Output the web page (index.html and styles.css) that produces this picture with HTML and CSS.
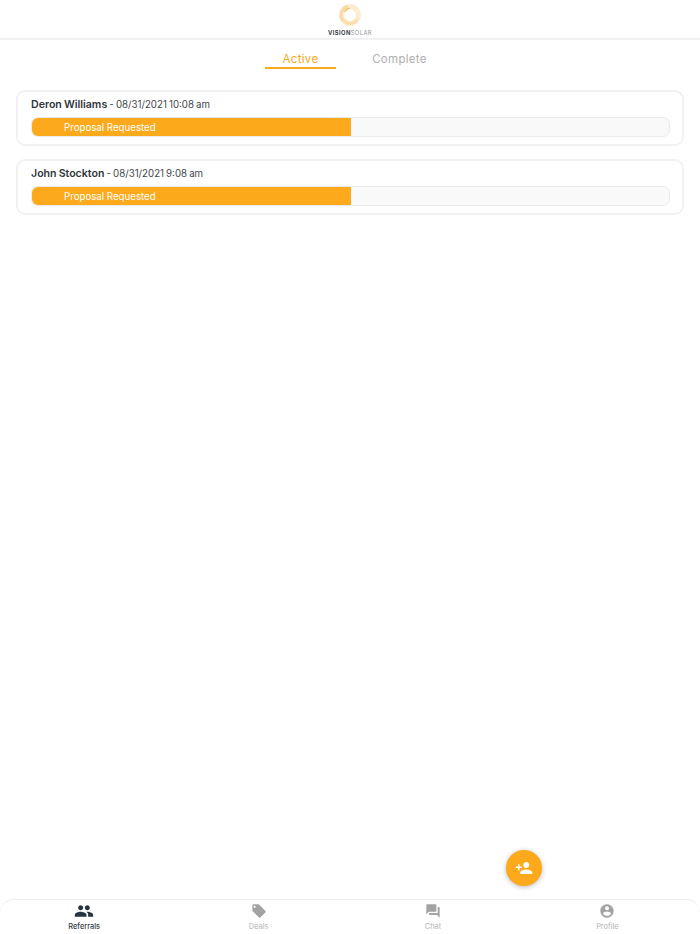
FILE: index.html
```html
<!DOCTYPE html>
<html lang="en">
<head>
<meta charset="utf-8"/>
<meta content="width=device-width, initial-scale=1.0" name="viewport"/>
<title>Vision Solar Referrals</title>
<link rel="stylesheet" href="styles.css">
</head>
<body>
<div class="page">
  <header class="top-bar">
    <div class="logo">
      <svg class="logo-mark" viewBox="0 0 24 24" width="24" height="24">
        <circle cx="12" cy="12" r="8.4" fill="none" stroke="#fdeccf" stroke-width="5"/>
        <path d="M10 3.4A8.8 8.8 0 0 0 5.4 18" fill="none" stroke="#fbd9a0" stroke-width="3"/>
        <path d="M5.4 17.5A9 9 0 0 0 19.5 16.5" fill="none" stroke="#fbdfb0" stroke-width="3"/>
        <path d="M6.6 9A6.4 6.4 0 0 1 12 5.2" fill="none" stroke="#f8c272" stroke-width="1.6"/>
      </svg>
      <div class="logo-text"><b>VISION</b>SOLAR</div>
    </div>
  </header>

  <nav class="tabs">
    <div class="tab active">Active</div>
    <div class="tab">Complete</div>
  </nav>

  <main class="list">
    <div class="card">
      <div class="card-title"><b>Deron Williams</b> - 08/31/2021 10:08 am</div>
      <div class="progress">
        <div class="progress-fill">Proposal Requested</div>
      </div>
    </div>
    <div class="card">
      <div class="card-title"><b>John Stockton</b> - 08/31/2021 9:08 am</div>
      <div class="progress">
        <div class="progress-fill">Proposal Requested</div>
      </div>
    </div>
  </main>

  <button class="fab">
    <svg viewBox="0 0 24 24" width="18" height="18"><path fill="#fff" d="M15 12c2.21 0 4-1.79 4-4s-1.79-4-4-4-4 1.79-4 4 1.79 4 4 4zm-9-2V7H4v3H1v2h3v3h2v-3h3v-2H6zm9 4c-2.67 0-8 1.34-8 4v2h16v-2c0-2.66-5.33-4-8-4z"/></svg>
  </button>

  <footer class="bottom-nav">
    <div class="nav-items">
      <div class="nav-item current">
        <svg viewBox="0 0 24 24" width="20" height="20"><path d="M16 11c1.66 0 2.99-1.34 2.99-3S17.66 5 16 5c-1.66 0-3 1.34-3 3s1.34 3 3 3zm-8 0c1.66 0 2.99-1.34 2.99-3S9.66 5 8 5C6.34 5 5 6.34 5 8s1.34 3 3 3zm0 2c-2.33 0-7 1.17-7 3.5V19h14v-2.5c0-2.33-4.67-3.5-7-3.5zm8 0c-.29 0-.62.02-.97.05 1.16.84 1.97 1.97 1.97 3.45V19h6v-2.5c0-2.33-4.67-3.5-7-3.5z"/></svg>
        <span>Referrals</span>
      </div>
      <div class="nav-item">
        <svg viewBox="0 0 24 24" width="16" height="16"><path d="M21.41 11.58l-9-9C12.05 2.22 11.55 2 11 2H4c-1.1 0-2 .9-2 2v7c0 .55.22 1.05.59 1.42l9 9c.36.36.86.58 1.41.58.55 0 1.05-.22 1.41-.59l7-7c.37-.36.59-.86.59-1.41 0-.55-.23-1.06-.59-1.42zM5.5 7C4.67 7 4 6.33 4 5.5S4.67 4 5.5 4 7 4.67 7 5.5 6.33 7 5.5 7z"/></svg>
        <span>Deals</span>
      </div>
      <div class="nav-item">
        <svg viewBox="0 0 24 24" width="16" height="16"><path d="M21 6h-2v9H6v2c0 .55.45 1 1 1h11l4 4V7c0-.55-.45-1-1-1zm-4 6V3c0-.55-.45-1-1-1H3c-.55 0-1 .45-1 1v14l4-4h10c.55 0 1-.45 1-1z"/></svg>
        <span>Chat</span>
      </div>
      <div class="nav-item">
        <svg viewBox="0 0 24 24" width="16" height="16"><path d="M12 2C6.48 2 2 6.48 2 12s4.48 10 10 10 10-4.48 10-10S17.52 2 12 2zm0 3c1.66 0 3 1.34 3 3s-1.34 3-3 3-3-1.34-3-3 1.34-3 3-3zm0 14.2c-2.5 0-4.71-1.28-6-3.22.03-1.99 4-3.08 6-3.08 1.99 0 5.97 1.09 6 3.08-1.29 1.94-3.5 3.22-6 3.22z"/></svg>
        <span>Profile</span>
      </div>
    </div>
  </footer>
</div>
</body>
</html>
```

FILE: styles.css
```css
html, body { margin: 0; padding: 0; background: #fff; }
body { font-family: Inter, "Noto Sans", sans-serif; color: #333a40; }
* { box-sizing: border-box; }

.page {
  position: relative;
  height: 934px;
  display: flex;
  flex-direction: column;
  overflow: hidden;
}

.top-bar {
  height: 40px;
  flex: none;
  display: flex;
  justify-content: center;
  border-bottom: 2px solid #f1f1f1;
}
.logo { display: flex; flex-direction: column; align-items: center; padding-top: 3px; }
.logo-mark { display: block; }
.logo-text { font-size: 5.8px; line-height: 8px; margin-top: 2px; letter-spacing: 0.4px; color: #8f9498; }
.logo-text b { color: #3d4449; }

.tabs {
  flex: none;
  display: flex;
  justify-content: center;
  gap: 28px;
  padding-top: 10px;
}
.tab {
  width: 71px;
  height: 19px;
  font-size: 11.5px;
  line-height: 18px;
  letter-spacing: 0.3px;
  text-align: center;
  color: #b0b0b0;
  border-bottom: 2px solid transparent;
}
.tab.active { color: #fca91c; border-bottom-color: #fca91c; }

.list {
  flex: 1;
  display: flex;
  flex-direction: column;
  gap: 13px;
  padding: 21px 16px 0;
}
.card {
  height: 56px;
  padding: 5px 12px 0 13px;
  border: 2px solid #f2f2f2;
  border-radius: 9px;
  background: #fff;
}
.card-title { height: 16px; font-size: 9.7px; line-height: 16px; word-spacing: -0.6px; color: #3f464b; }
.card-title b { font-size: 10.6px; font-weight: 600; color: #30373c; }

.progress {
  height: 20px;
  margin-top: 4px;
  background: #f9f9f9;
  border: 1px solid #ebebeb;
  border-radius: 7px;
  overflow: hidden;
}
.progress-fill {
  width: 50%;
  height: 18px;
  padding-left: 32px;
  background: #fca91c;
  color: #fff;
  font-size: 9.7px;
  line-height: 19px;
}

.fab {
  position: absolute;
  left: 506px;
  top: 850px;
  width: 36px;
  height: 36px;
  padding: 0;
  border: none;
  border-radius: 50%;
  background: #fca91c;
  box-shadow: 0 1px 5px rgba(0, 0, 0, 0.28);
  display: flex;
  align-items: center;
  justify-content: center;
}

.bottom-nav {
  flex: none;
  height: 35px;
  border-top: 1px solid #ececec;
  border-radius: 14px 14px 0 0;
}
.nav-items {
  margin-left: -3px;
  display: grid;
  grid-template-columns: repeat(4, 174.4px);
}
.nav-item {
  display: flex;
  flex-direction: column;
  align-items: center;
  height: 34px;
  color: #b4b4b4;
  font-size: 7.4px;
  line-height: 10px;
}
.nav-item svg { fill: #a3a3a3; display: block; margin-top: 3px; margin-bottom: 3px; }
.nav-item.current { color: #2f3b46; font-weight: 500; }
.nav-item.current svg { fill: #263441; margin-top: 1px; margin-bottom: 1px; }
```
